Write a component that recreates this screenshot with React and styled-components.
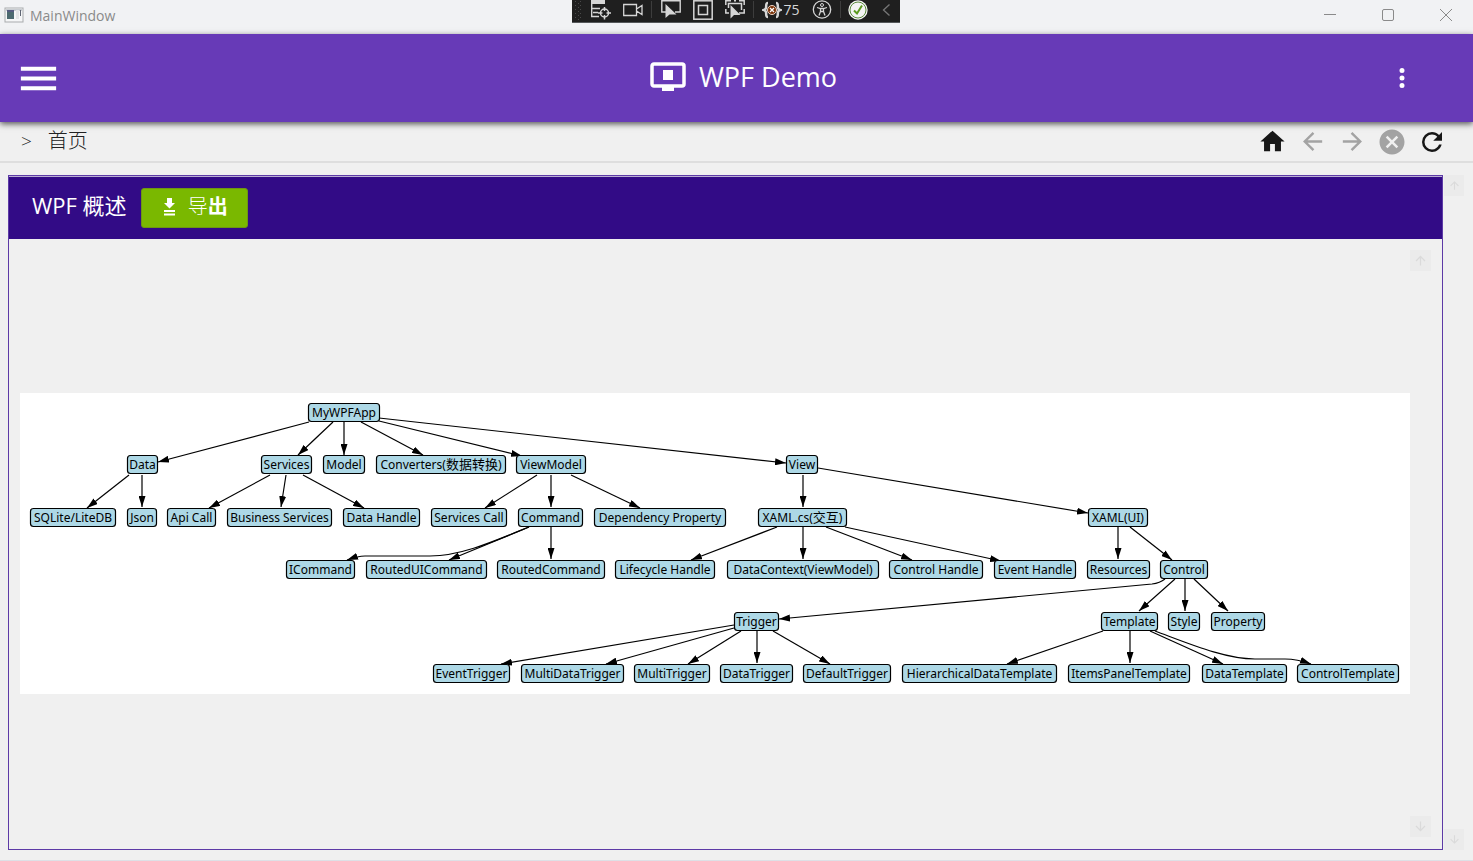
import React from "react";
import styled, { createGlobalStyle, css } from "styled-components";

const GlobalStyle = createGlobalStyle`
  * { box-sizing: border-box; }
  body {
    margin: 0;
    background: #f0f0f0;
    font-family: "Open Sans", "Noto Sans CJK SC", sans-serif;
    color: #222;
  }
  button { font-family: inherit; }
`;

const Window = styled.div`
  min-height: 100vh;
  display: flex;
  flex-direction: column;
  border-bottom: 1px solid #dde0e6;
`;

const TitleBar = styled.div`
  height: 34px;
  display: grid;
  grid-template-columns: 1fr auto 1fr;
  align-items: start;
  padding-right: 2px;
  background: #f1f2f4;
`;

const WindowTitle = styled.div`
  display: flex;
  align-items: center;
  gap: 6px;
  height: 30px;
  padding-left: 4px;
  font-size: 14px;
  color: #8a8a8a;
`;

const PlainButton = styled.button`
  display: flex;
  align-items: center;
  justify-content: center;
  padding: 0;
  border: 0;
  background: transparent;
  color: inherit;
`;

const WindowControls = styled.div`
  display: flex;
  justify-content: flex-end;
  gap: 8px;
  color: #8a8a8a;
`;

const WindowControl = styled(PlainButton)`
  width: 50px;
  height: 30px;
`;

const DebugBar = styled.div`
  display: flex;
  height: 23px;
  background: #1f1f1f;
  border: solid #55585a;
  border-width: 0 0 1px;
  color: #d6d6d6;
`;

const DebugTool = styled(PlainButton)`
  width: ${(p) => p.$width || 32}px;
  height: 20px;
  font-size: 14px;
  line-height: 20px;
  gap: 1px;
  color: ${(p) => (p.$dim ? "#777" : "#d6d6d6")};
`;

const Grip = styled.div`
  width: 13px;
  display: flex;
  justify-content: center;
`;

const Separator = styled.div`
  width: 6px;
  padding: 1px 0 4px 2px;
  &::before {
    content: "";
    display: block;
    width: 1px;
    height: 100%;
    background: #3d3d3d;
  }
`;

const AppBar = styled.header`
  position: relative;
  z-index: 1;
  height: 88px;
  display: grid;
  grid-template-columns: 1fr auto 1fr;
  align-items: center;
  padding: 0 55px 0 15px;
  background: #673ab7;
  color: #fff;
  box-shadow: 0 2px 6px rgba(0, 0, 0, 0.65);
`;

const Brand = styled.h1`
  display: flex;
  align-items: center;
  gap: 13px;
  margin: 0 0 3px 54px;
  font-size: 27px;
  line-height: 36px;
  font-weight: 400;
`;

const MenuButton = styled(PlainButton)`
  width: 47px;
  height: 46px;
`;

const MoreButton = styled(PlainButton)`
  width: 32px;
  height: 40px;
  justify-self: end;
`;

const NavBar = styled.nav`
  height: 41px;
  display: flex;
  align-items: center;
  justify-content: space-between;
  padding: 0 21px;
  border-bottom: 2px solid #dedede;
`;

const Crumbs = styled.div`
  display: flex;
  align-items: center;
  gap: 16px;
  font-size: 20px;
  line-height: 28px;
  font-weight: 300;
  padding-bottom: 2px;
`;

const Chevron = styled.span`
  font-size: 19px;
`;

const NavActions = styled.div`
  display: flex;
`;

const NavButton = styled(PlainButton)`
  width: 40px;
  height: 38px;
  color: ${(p) => (p.disabled ? "#a3a3a3" : "#171717")};
`;

const Main = styled.main`
  flex: 1;
  display: flex;
  padding: 12px 9px 10px 8px;
`;

const Panel = styled.section`
  flex: 1;
  min-width: 0;
  display: flex;
  flex-direction: column;
  border: 1px solid #5d3aa6;
`;

const PanelHeader = styled.div`
  height: 63px;
  display: flex;
  align-items: center;
  gap: 14px;
  padding: 0 23px;
  border-top: 1px solid #b9aed3;
  background: #320b86;
  color: #fff;
`;

const PanelTitle = styled.h2`
  margin: 0 0 6px;
  font-size: 22px;
  line-height: 32px;
  font-weight: 400;
`;

const ExportButton = styled.button`
  display: flex;
  align-items: center;
  justify-content: center;
  gap: 9px;
  width: 107px;
  height: 40px;
  padding: 0 0 2px;
  border: 1px solid #6f9612;
  border-radius: 3px;
  background: #7ab800;
  color: #fff;
  font-size: 20px;
  line-height: 32px;
  font-weight: 300;
  b { font-weight: 700; }
`;

const PanelBody = styled.div`
  flex: 1;
  display: flex;
  align-items: center;
  padding: 11px 11px 12px;
`;

const Diagram = styled.svg`
  flex: 1;
  min-width: 0;
  background: #fff;
  font-family: "Noto Sans", "Noto Sans CJK SC", sans-serif;
  font-size: 12px;
`;

const ScrollTrack = styled.div`
  align-self: stretch;
  flex: none;
  width: ${(p) => p.$size}px;
  display: flex;
  flex-direction: column;
  justify-content: space-between;
`;

const ScrollButton = styled(PlainButton)`
  height: 21px;
  background: #ebebeb;
  color: #dadada;
  ${(p) => p.$down && css`svg { transform: rotate(180deg); }`}
`;

const OuterTrack = styled(ScrollTrack)`
  margin-left: 1px;
`;

const Icon = ({ size = 24, d }) => (
  <svg width={size} height={size} viewBox="0 0 24 24" fill="currentColor" aria-hidden="true">
    <path d={d} />
  </svg>
);

const ICONS = {
  menu: "M3,6H21V8H3V6M3,11H21V13H3V11M3,16H21V18H3V16Z",
  more: "M12,16A2,2 0 0,1 14,18A2,2 0 0,1 12,20A2,2 0 0,1 10,18A2,2 0 0,1 12,16M12,10A2,2 0 0,1 14,12A2,2 0 0,1 12,14A2,2 0 0,1 10,12A2,2 0 0,1 12,10M12,4A2,2 0 0,1 14,6A2,2 0 0,1 12,8A2,2 0 0,1 10,6A2,2 0 0,1 12,4Z",
  home: "M10,20V14H14V20H19V12H22L12,3L2,12H5V20H10Z",
  back: "M20,11V13H8L13.5,18.5L12.08,19.92L4.16,12L12.08,4.08L13.5,5.5L8,11H20Z",
  forward: "M4,11V13H16L10.5,18.5L11.92,19.92L19.84,12L11.92,4.08L10.5,5.5L16,11H4Z",
  stop: "M12,2C17.53,2 22,6.47 22,12C22,17.53 17.53,22 12,22C6.47,22 2,17.53 2,12C2,6.47 6.47,2 12,2M15.59,7L12,10.59L8.41,7L7,8.41L10.59,12L7,15.59L8.41,17L12,13.41L15.59,17L17,15.59L13.41,12L17,8.41L15.59,7Z",
  refresh: "M17.65,6.35C16.2,4.9 14.21,4 12,4A8,8 0 0,0 4,12A8,8 0 0,0 12,20C15.73,20 18.84,17.45 19.73,14H17.65C16.83,16.33 14.61,18 12,18A6,6 0 0,1 6,12A6,6 0 0,1 12,6C13.66,6 15.14,6.69 16.22,7.78L13,11H20V4L17.65,6.35Z",
  up: "M13,20H11V8L5.5,13.5L4.08,12.08L12,4.16L19.92,12.08L18.5,13.5L13,8V20Z",
};

const ToolIcon = ({ children }) => (
  <svg width="20" height="20" viewBox="0 0 20 20" fill="none" stroke="currentColor" aria-hidden="true">
    {children}
  </svg>
);

const WindowIcon = () => (
  <svg width="20" height="16" viewBox="0 0 20 16" aria-hidden="true">
    <rect x="1" y="1" width="18" height="14" fill="#f5f6f7" stroke="#a9abad" />
    <rect x="2" y="2" width="16" height="2" fill="#c9cdd2" />
    <rect x="3" y="4" width="7" height="8" fill="#4c6a70" />
    <rect x="3" y="3" width="7" height="2" fill="#555c80" />
    <rect x="12" y="3" width="3" height="9" fill="#e2e4e6" />
    <rect x="16" y="3" width="1" height="6" fill="#5f6573" />
  </svg>
);

const GlyphIcon = ({ children }) => (
  <svg width="14" height="14" viewBox="0 0 14 14" fill="none" stroke="currentColor" aria-hidden="true">
    {children}
  </svg>
);

function DebugToolbar() {
  return (
    <DebugBar role="toolbar" aria-label="XAML debug tools">
      <Grip>
        <svg width="7" height="22" viewBox="0 0 7 22" fill="#4a4a4a" aria-hidden="true">
          {[1, 5, 9, 13, 17].map((y) => (
            <g key={y}>
              <rect x="0" y={y} width="1" height="1" />
              <rect x="5" y={y} width="1" height="1" />
              <rect x="3" y={y + 2} width="1" height="1" />
            </g>
          ))}
        </svg>
      </Grip>
      <DebugTool aria-label="Live visual tree">
        <ToolIcon>
          <path d="M0 0H14V4H0Z" fill="currentColor" stroke="none" />
          <path d="M.7 4V16.500H8M.7 8.500H9M2 12.500H7" strokeWidth="1.400" />
          <circle cx="13.500" cy="13" r="4" strokeWidth="1.500" />
          <path d="M13.500 7V11M13.500 15V19.500M7 13H11.500M15.500 13H20" strokeWidth="1.500" />
        </ToolIcon>
      </DebugTool>
      <DebugTool aria-label="Record">
        <ToolIcon>
          <path d="M.7 4.500H13.500V15.500H.7ZM13.500 9L19 5.500V14.500L13.500 11" strokeWidth="1.300" />
        </ToolIcon>
      </DebugTool>
      <Separator />
      <DebugTool aria-label="Select element">
        <ToolIcon>
          <path d="M5 12H.8V.8H19.200V12H14" strokeWidth="1.400" />
          <path d="M4.500 4V18L8.500 14.500H15.500Z" fill="currentColor" stroke="none" />
        </ToolIcon>
      </DebugTool>
      <DebugTool aria-label="Display layout adorners">
        <ToolIcon>
          <rect x=".8" y=".8" width="18.400" height="18.400" strokeWidth="1.500" />
          <rect x="5.500" y="5.500" width="9" height="9" strokeWidth="1.500" />
        </ToolIcon>
      </DebugTool>
      <DebugTool aria-label="Track focused element">
        <ToolIcon>
          <path d="M.8 5V.8H6M14 .8H19.200V5M19.200 9V13H14M.8 9V13H4M3.500 8V3.500H16.500V10M9 .8H11" strokeWidth="1.500" />
          <path d="M5.500 5V18.500L9 15H15.500Z" fill="currentColor" stroke="none" />
        </ToolIcon>
      </DebugTool>
      <Separator />
      <DebugTool $width={49} aria-label="Binding failures 75">
        <ToolIcon>
          <path d="M6 3C3.500 3 4.500 5.500 4 8Q3.500 9.500 2 10Q3.500 10.500 4 12C4.500 14.500 3.500 17 6 17M14 3C16.500 3 15.500 5.500 16 8Q16.500 9.500 18 10Q16.500 10.500 16 12C15.500 14.500 16.500 17 14 17" strokeWidth="2.500" />
          <circle cx="10" cy="10" r="4.500" fill="#7a3208" stroke="#f1d8c8" />
          <path d="M8 8L12 12M12 8L8 12" stroke="#fff" strokeWidth="1.300" />
        </ToolIcon>
        75
      </DebugTool>
      <DebugTool aria-label="Accessibility checker">
        <ToolIcon>
          <circle cx="10" cy="9.500" r="8.700" strokeWidth="1.300" />
          <circle cx="10" cy="5" r="1.500" />
          <path d="M5 7.500L8.500 8.500H11.500L15 7.500M8.500 8.500V11.500L7 15.500M11.500 8.500V11.500L13 15.500M8.500 11.500H11.500" strokeWidth="1.300" />
        </ToolIcon>
      </DebugTool>
      <Separator />
      <DebugTool $width={28} aria-label="Hot reload available">
        <ToolIcon>
          <circle cx="10" cy="10" r="9.700" fill="#f4f4f4" stroke="none" />
          <circle cx="10" cy="10" r="8" stroke="#5b8a3c" />
          <path d="M6 10.500L9 13.500L14 5.500" stroke="#5b9a1e" strokeWidth="2" />
        </ToolIcon>
      </DebugTool>
      <DebugTool $width={28} $dim aria-label="Collapse toolbar">
        <ToolIcon>
          <path d="M13.500 4.500L7.500 10L13.500 15.500" strokeWidth="1.300" />
        </ToolIcon>
      </DebugTool>
    </DebugBar>
  );
}

const ROWS = [
  [10, [["MyWPFApp", 288, 72]]],
  [62, [
    ["Data", 107, 31], ["Services", 241, 51], ["Model", 303, 42],
    ["Converters(数据转换)", 356, 130], ["ViewModel", 496, 70], ["View", 766, 32],
  ]],
  [115, [
    ["SQLite/LiteDB", 10, 86], ["Json", 107, 30], ["Api Call", 147, 49],
    ["Business Services", 207, 105], ["Data Handle", 323, 77], ["Services Call", 411, 76],
    ["Command", 498, 65], ["Dependency Property", 574, 132], ["XAML.cs(交互)", 738, 89],
    ["XAML(UI)", 1068, 60],
  ]],
  [167, [
    ["ICommand", 266, 69], ["RoutedUICommand", 346, 121], ["RoutedCommand", 477, 108],
    ["Lifecycle Handle", 595, 100], ["DataContext(ViewModel)", 707, 152],
    ["Control Handle", 869, 94], ["Event Handle", 974, 82], ["Resources", 1067, 63],
    ["Control", 1140, 48],
  ]],
  [219, [["Trigger", 714, 45], ["Template", 1081, 57], ["Style", 1148, 32], ["Property", 1191, 54]]],
  [271, [
    ["EventTrigger", 413, 77], ["MultiDataTrigger", 501, 103], ["MultiTrigger", 614, 76],
    ["DataTrigger", 700, 73], ["DefaultTrigger", 783, 88], ["HierarchicalDataTemplate", 882, 155],
    ["ItemsPanelTemplate", 1048, 122], ["DataTemplate", 1182, 85], ["ControlTemplate", 1277, 102],
  ]],
];

const EDGES = [
  "M289 29L138 69", "M313 29L278 62", "M324 29V62", "M341 29L403 62", "M359 28L502 63", "M359 25L766 70",
  "M109 82L67 115", "M122 82V114", "M250 82L189 115", "M266 82L261 114", "M283 82L344 115",
  "M517 82L465 115", "M531 82V114", "M551 82L620 115", "M783 82V114", "M798 75L1068 120",
  "M509 134C470 150 440 163 410 163H345Q338 163 327 167", "M509 134L429 167", "M531 134V166",
  "M757 134L671 167", "M783 134V166", "M806 134L892 167", "M825 134L981 168",
  "M1098 134V166", "M1110 134L1152 167",
  "M1145 186Q1140 190 1132 191L759 226", "M1155 186L1119 218", "M1165 186V218", "M1174 186L1208 218",
  "M714 232L481 271", "M714 235L586 271", "M721 238L668 271", "M737 238V270", "M753 238L810 271",
  "M1083 238L987 271", "M1110 238V270", "M1130 238L1203 271",
  "M1135 238C1170 251 1205 266 1235 266H1265Q1277 266 1291 271",
];

function TreeDiagram() {
  return (
    <Diagram viewBox="0 0 1390 301" role="img" aria-label="WPF 概述">
      <defs>
        <marker id="arrow" viewBox="0 0 11 7" refX="11" refY="3.500" markerWidth="11" markerHeight="7" markerUnits="userSpaceOnUse" orient="auto">
          <path d="M0 0L11 3.500L0 7Z" />
        </marker>
      </defs>
      <g fill="none" stroke="#000" strokeWidth="1.200">
        {EDGES.map((d) => (
          <path key={d} d={d} markerEnd="url(#arrow)" />
        ))}
      </g>
      {ROWS.map(([y, nodes]) =>
        nodes.map(([label, x, w]) => (
          <g key={label}>
            <rect x={x + 0.5} y={y + 0.5} width={w - 1} height="18" rx="3" fill="#add8e6" stroke="#000" strokeWidth="1.200" />
            <text x={x + w / 2} y={y + 14} textAnchor="middle">
              {label.split(/([\u4e00-\u9fff]+)/).map((part, i) =>
                i % 2 ? <tspan key={i} fontSize="13">{part}</tspan> : part
              )}
            </text>
          </g>
        ))
      )}
    </Diagram>
  );
}

export default function App() {
  return (
    <Window>
      <GlobalStyle />
      <TitleBar>
        <WindowTitle>
          <WindowIcon />
          MainWindow
        </WindowTitle>
        <DebugToolbar />
        <WindowControls>
          <WindowControl aria-label="Minimize">
            <GlyphIcon><path d="M1 6.500H13" /></GlyphIcon>
          </WindowControl>
          <WindowControl aria-label="Maximize">
            <GlyphIcon><rect x="1.500" y="1.500" width="11" height="11" rx="1.500" /></GlyphIcon>
          </WindowControl>
          <WindowControl aria-label="Close">
            <GlyphIcon><path d="M1 1L13 13M13 1L1 13" /></GlyphIcon>
          </WindowControl>
        </WindowControls>
      </TitleBar>

      <AppBar>
        <MenuButton aria-label="Menu"><Icon size={47} d={ICONS.menu} /></MenuButton>
        <Brand>
          <svg width="36" height="30" viewBox="0 0 36 30" aria-hidden="true">
            <rect x="2" y="2" width="32" height="22" rx="2" fill="none" stroke="currentColor" strokeWidth="3.500" />
            <rect x="13" y="8" width="10" height="10" fill="currentColor" />
            <rect x="12" y="25" width="12" height="4" fill="currentColor" />
          </svg>
          WPF Demo
        </Brand>
        <MoreButton aria-label="More"><Icon size={30} d={ICONS.more} /></MoreButton>
      </AppBar>

      <NavBar>
        <Crumbs>
          <Chevron>&gt;</Chevron>
          <span>首页</span>
        </Crumbs>
        <NavActions>
          <NavButton aria-label="Home"><Icon size={29} d={ICONS.home} /></NavButton>
          <NavButton aria-label="Back" disabled><Icon size={29} d={ICONS.back} /></NavButton>
          <NavButton aria-label="Forward" disabled><Icon size={29} d={ICONS.forward} /></NavButton>
          <NavButton aria-label="Close page" disabled><Icon size={30} d={ICONS.stop} /></NavButton>
          <NavButton aria-label="Refresh"><Icon size={30} d={ICONS.refresh} /></NavButton>
        </NavActions>
      </NavBar>

      <Main>
        <Panel>
          <PanelHeader>
            <PanelTitle>WPF 概述</PanelTitle>
            <ExportButton>
              <svg width="18" height="18" viewBox="0 0 18 18" fill="currentColor" aria-hidden="true">
                <path d="M6 0H11V5H14L8.500 10.500L3 5H6ZM3 12H14V14H3ZM3 15.500H14V17.500H3Z" />
              </svg>
              <span>导<b>出</b></span>
            </ExportButton>
          </PanelHeader>
          <PanelBody>
            <TreeDiagram />
            <ScrollTrack $size={21}>
              <ScrollButton aria-label="Scroll diagram up"><Icon size={15} d={ICONS.up} /></ScrollButton>
              <ScrollButton aria-label="Scroll diagram down" $down><Icon size={15} d={ICONS.up} /></ScrollButton>
            </ScrollTrack>
          </PanelBody>
        </Panel>
        <OuterTrack $size={20}>
          <ScrollButton aria-label="Scroll page up"><Icon size={13} d={ICONS.up} /></ScrollButton>
          <ScrollButton aria-label="Scroll page down" $down><Icon size={13} d={ICONS.up} /></ScrollButton>
        </OuterTrack>
      </Main>
    </Window>
  );
}
